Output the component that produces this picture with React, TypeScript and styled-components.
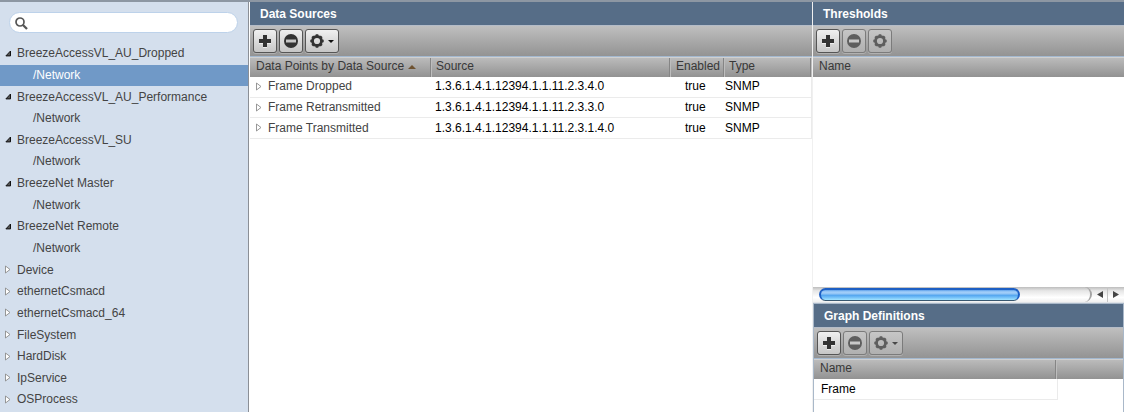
import React from "react";
import styled, { createGlobalStyle, css } from "styled-components";

const GlobalStyle = createGlobalStyle`
  * { box-sizing: border-box; }
  body {
    margin: 0;
    overflow: hidden;
    background: #fff;
    font-family: "Liberation Sans", Arial, Helvetica, sans-serif;
    font-size: 12px;
    color: #000;
  }
`;

const Page = styled.div`
  display: flex;
  width: 1124px;
  height: 412px;
  border-top: 2px solid #8d97a3;
  overflow: hidden;
`;

const Sidebar = styled.nav`
  width: 249px;
  flex: none;
  background: #d4dfed;
  border-right: 1px solid #8b8f96;
  overflow: hidden;
`;

const SearchBox = styled.label`
  display: flex;
  align-items: center;
  width: 229px;
  height: 21px;
  margin: 10px 0 10.1px 9px;
  padding: 1px 0 0 5px;
  border: 1px solid #bdd2ea;
  border-radius: 11px;
  background: #fff;
`;

const TreeRow = styled.div<{ $child?: boolean; $selected?: boolean }>`
  display: flex;
  align-items: center;
  height: 21.65px;
  padding-left: ${(p) => (p.$child ? 33 : 5)}px;
  padding-bottom: 1.4px;
  color: ${(p) => (p.$selected ? "#fff" : "#444")};
  background: ${(p) => (p.$selected ? "#7099c7" : "transparent")};
  white-space: nowrap;
`;

const ArrowSlot = styled.span`
  display: flex;
  width: 12px;
  flex: none;
`;

const Main = styled.main`
  width: 563px;
  flex: none;
  margin-left: 1px;
  border-right: 1px solid #f0f0f0;
`;

const RightColumn = styled.aside`
  display: flex;
  flex-direction: column;
  flex: 1;
  min-width: 0;
`;

const ThresholdPanel = styled.section`
  display: flex;
  flex-direction: column;
  height: 301px;
  border-bottom: 1px solid #dfe3e8;
`;

const GraphPanel = styled.section`
  flex: 1;
  border: solid #a9b8c9;
  border-width: 1px 1px 0 1px;
`;

const Title = styled.h2`
  margin: 0;
  height: 23px;
  padding-left: 10px;
  font-size: 12px;
  line-height: 24px;
  font-weight: bold;
  color: #fff;
  background: #566d87;
`;

const Toolbar = styled.div`
  display: flex;
  gap: 2px;
  height: 32px;
  padding: 3px 0 0 3px;
  border-top: 1px solid #b4bcc8;
  border-bottom: 1px solid #a3b8cf;
  background: linear-gradient(#bfbfbf, #939393);
`;

const ToolButton = styled.button<{ $menu?: boolean; $off?: boolean }>`
  display: flex;
  align-items: center;
  width: ${(p) => (p.$menu ? 34 : 24)}px;
  height: 24px;
  padding: 0 0 0 3px;
  gap: 3px;
  border: 1px solid ${(p) => (p.$off ? "#7b7b7b" : "#555")};
  border-radius: 3px;
  color: ${(p) => (p.$off ? "#5e5e5e" : "#333")};
  background: ${(p) =>
    p.$off ? "linear-gradient(#c6c6c6, #b0b0b0)" : "linear-gradient(#f0f0f0, #c6c6c6)"};
  box-shadow: 0 1px 0 rgba(255, 255, 255, 0.25);
`;

const headerCell = css`
  height: 19px;
  border-right: 1px solid #858585;
  box-shadow: 1px 0 0 #bdbdbd;
`;

const HeaderRow = styled.div`
  display: flex;
  height: 20px;
  border-top: 1px solid #d0d0d0;
  color: #383838;
  background: linear-gradient(#bbb, #929292);
  overflow: hidden;
`;

const HeaderCell = styled.div<{ $w: number; $last?: boolean; $pad?: number }>`
  width: ${(p) => p.$w}px;
  padding-left: ${(p) => p.$pad ?? 5}px;
  flex: none;
  line-height: 16px;
  white-space: nowrap;
  ${(p) => !p.$last && headerCell}
`;

const SortMark = styled.span`
  display: inline-block;
  margin-left: 4px;
  vertical-align: 1px;
  border: solid transparent;
  border-width: 0 4px 4px 4px;
  border-bottom-color: #6e5230;
`;

const DataRow = styled.div<{ $h: number; $w: number; $line?: number }>`
  display: flex;
  width: ${(p) => p.$w}px;
  height: ${(p) => p.$h}px;
  line-height: ${(p) => p.$line ?? 19}px;
  border: solid #ebebeb;
  border-width: 0 1px 1px 0;
`;

const Cell = styled.div<{ $w: number; $pad?: number; $muted?: boolean }>`
  display: flex;
  align-items: flex-start;
  width: ${(p) => p.$w}px;
  padding-left: ${(p) => p.$pad ?? 0}px;
  color: ${(p) => (p.$muted ? "#444" : "#000")};
  white-space: nowrap;
`;

const RowArrow = styled(ArrowSlot)`
  height: 19px;
  align-items: center;
`;

const PanelBody = styled.div`
  flex: 1;
`;

const ScrollBar = styled.div`
  display: flex;
  height: 15px;
  background: linear-gradient(#bdbdbd, #e6e6e6 25%, #fff 70%, #f0f0f0);
`;

const ScrollTrack = styled.div`
  width: 279px;
  padding: 1px 0 0 6px;
  border-right: 2px solid #a5a5a5;
  border-radius: 0 8px 8px 0;
`;

const ScrollThumb = styled.div`
  width: 201px;
  height: 13px;
  border: 2px solid #1d5fc4;
  border-bottom: 1px solid #38576f;
  border-radius: 7px;
  background: linear-gradient(#5e9fe9, #a5d0fa 20%, #8cc2f5 42%, #4fa2ee 50%, #70bdf7 72%, #a2e4ff);
`;

const ScrollButton = styled.div`
  display: flex;
  align-items: center;
  justify-content: center;
  width: 15px;
  & + & {
    width: 17px;
    border-left: 1px solid #c5c5c5;
  }
`;

const OpenArrow = () => (
  <svg width="7" height="7" viewBox="0 0 7 7">
    <path d="M5.5 1V5.9H.9Z" fill="#555" stroke="#111" strokeWidth="1" />
  </svg>
);

const ClosedArrow = () => (
  <svg width="6" height="9" viewBox="0 0 6 9">
    <path d="M.5 1V8L5 4.5Z" fill="#fff" stroke="#8c8c8c" strokeWidth=".9" />
  </svg>
);

const SearchIcon = () => (
  <svg width="13" height="13" viewBox="0 0 13 13" fill="none" stroke="#555">
    <circle cx="5" cy="5" r="4" strokeWidth="1.7" />
    <path d="M8 8L12 12" strokeWidth="2.3" />
  </svg>
);

const PlusIcon = () => (
  <svg width="16" height="16" viewBox="0 0 16 16">
    <path d="M6 3H10V7H14V11H10V15H6V11H2V7H6Z" fill="#fff" opacity=".6" />
    <path d="M6 2H10V6H14V10H10V14H6V10H2V6H6Z" fill="currentColor" />
  </svg>
);

const MinusIcon = () => (
  <svg width="16" height="16" viewBox="0 0 16 16">
    <circle cx="8" cy="8" r="7" fill="currentColor" />
    <rect x="3" y="6.5" width="10" height="3" fill="#c8c8c8" />
  </svg>
);

const GearIcon = () => (
  <svg width="16" height="16" viewBox="0 0 16 16" fill="none" stroke="currentColor">
    <circle cx="8" cy="8" r="4.5" strokeWidth="2.8" />
    <path
      d="M8 1.3V3.5M8 12.5V14.7M1.3 8H3.5M12.5 8H14.7M3.3 3.3L5 5M11 11L12.7 12.7M12.7 3.3L11 5M5 11L3.3 12.7"
      strokeWidth="2.6"
    />
  </svg>
);

const Caret = ({ off }: { off?: boolean }) => (
  <svg width="6" height="3" viewBox="0 0 6 3">
    <path d="M0 0H6L3 3Z" fill={off ? "#484848" : "#111"} />
  </svg>
);

const Tools = ({ off, menu }: { off?: boolean; menu?: boolean }) => (
  <Toolbar>
    <ToolButton aria-label="Add"><PlusIcon /></ToolButton>
    <ToolButton $off={off} aria-label="Remove"><MinusIcon /></ToolButton>
    <ToolButton $off={off} $menu={menu} aria-label="Settings">
      <GearIcon />
      {menu && <Caret off={off} />}
    </ToolButton>
  </Toolbar>
);

const tree: { name: string; open?: boolean; selected?: boolean }[] = [
  { name: "BreezeAccessVL_AU_Dropped", open: true, selected: true },
  { name: "BreezeAccessVL_AU_Performance", open: true },
  { name: "BreezeAccessVL_SU", open: true },
  { name: "BreezeNet Master", open: true },
  { name: "BreezeNet Remote", open: true },
  { name: "Device" },
  { name: "ethernetCsmacd" },
  { name: "ethernetCsmacd_64" },
  { name: "FileSystem" },
  { name: "HardDisk" },
  { name: "IpService" },
  { name: "OSProcess" },
];

const sources = [
  { name: "Frame Dropped", oid: "1.3.6.1.4.1.12394.1.1.11.2.3.4.0", h: 21, line: 19 },
  { name: "Frame Retransmitted", oid: "1.3.6.1.4.1.12394.1.1.11.2.3.3.0", h: 20, line: 19 },
  { name: "Frame Transmitted", oid: "1.3.6.1.4.1.12394.1.1.11.2.3.1.4.0", h: 21, line: 21 },
];

export default function App() {
  return (
    <>
      <GlobalStyle />
      <Page>
        <Sidebar>
          <SearchBox><SearchIcon /></SearchBox>
          {tree.map((n) => (
            <React.Fragment key={n.name}>
              <TreeRow>
                <ArrowSlot>{n.open ? <OpenArrow /> : <ClosedArrow />}</ArrowSlot>
                {n.name}
              </TreeRow>
              {n.open && <TreeRow $child $selected={n.selected}>/Network</TreeRow>}
            </React.Fragment>
          ))}
        </Sidebar>
        <Main>
          <Title>Data Sources</Title>
          <Tools menu />
          <HeaderRow>
            <HeaderCell $w={181} $pad={6}>Data Points by Data Source<SortMark /></HeaderCell>
            <HeaderCell $w={239}>Source</HeaderCell>
            <HeaderCell $w={54} $pad={6}>Enabled</HeaderCell>
            <HeaderCell $w={87}>Type</HeaderCell>
          </HeaderRow>
          {sources.map((s) => (
            <DataRow key={s.name} $h={s.h} $w={562} $line={s.line}>
              <Cell $w={185} $pad={6} $muted><RowArrow><ClosedArrow /></RowArrow>{s.name}</Cell>
              <Cell $w={250}>{s.oid}</Cell>
              <Cell $w={40}>true</Cell>
              <Cell $w={80}>SNMP</Cell>
            </DataRow>
          ))}
        </Main>
        <RightColumn>
          <ThresholdPanel>
            <Title>Thresholds</Title>
            <Tools off />
            <HeaderRow><HeaderCell $w={311} $pad={6} $last>Name</HeaderCell></HeaderRow>
            <PanelBody />
            <ScrollBar>
              <ScrollTrack><ScrollThumb /></ScrollTrack>
              <ScrollButton>
                <svg width="6" height="7" viewBox="0 0 6 7"><path d="M6 0V7L0 3.5Z" fill="#444" /></svg>
              </ScrollButton>
              <ScrollButton>
                <svg width="6" height="7" viewBox="0 0 6 7"><path d="M0 0V7L6 3.5Z" fill="#444" /></svg>
              </ScrollButton>
            </ScrollBar>
          </ThresholdPanel>
          <GraphPanel>
            <Title>Graph Definitions</Title>
            <Tools off menu />
            <HeaderRow><HeaderCell $w={242} $pad={6}>Name</HeaderCell></HeaderRow>
            <DataRow $h={21} $w={244} $line={21}><Cell $w={240} $pad={7}>Frame</Cell></DataRow>
          </GraphPanel>
        </RightColumn>
      </Page>
    </>
  );
}
